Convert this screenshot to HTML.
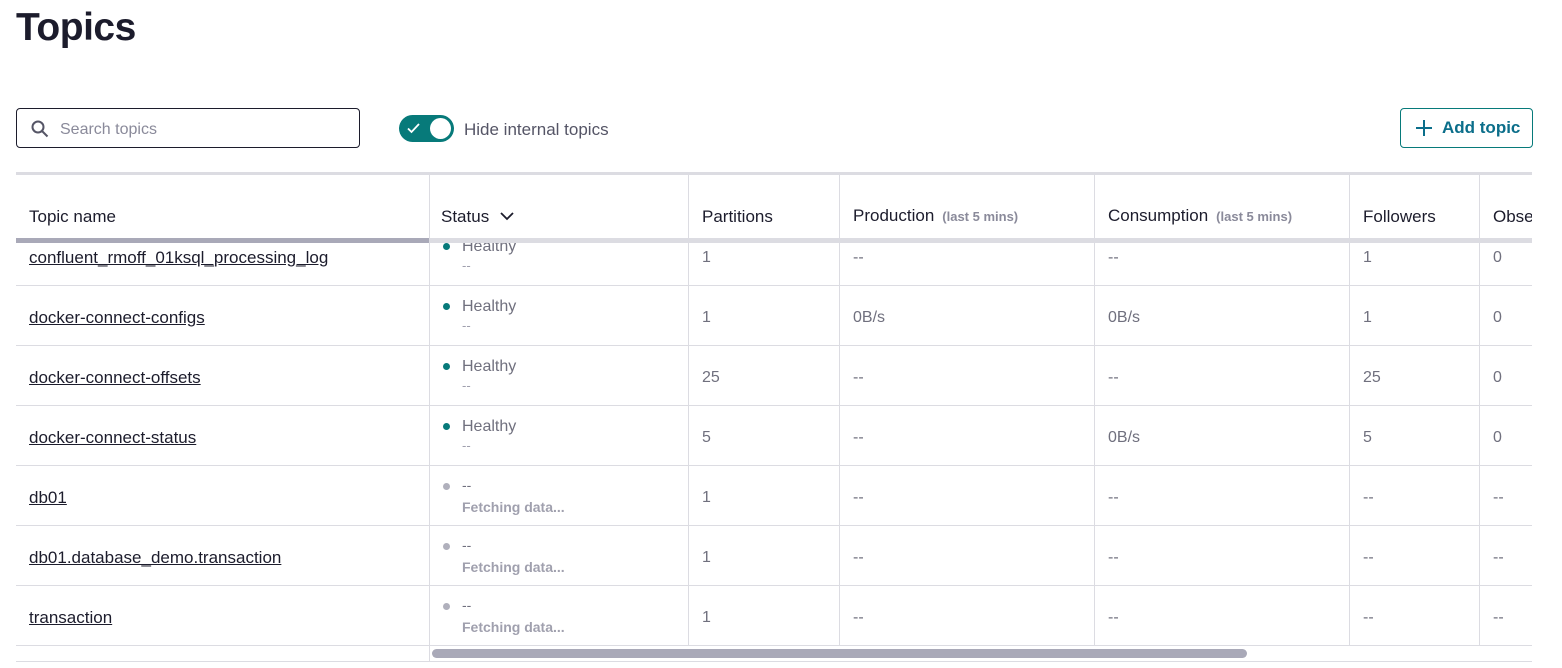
<!DOCTYPE html>
<html><head><meta charset="utf-8"><style>
*{box-sizing:border-box;margin:0;padding:0}
body{width:1562px;height:668px;background:#fff;font-family:"Liberation Sans",sans-serif;position:relative;overflow:hidden;color:#1c1c2c}
.a{position:absolute}
h1{position:absolute;left:16px;top:6px;font-size:39px;font-weight:bold;color:#1c1c2c;letter-spacing:-0.5px}
.search{left:16px;top:108px;width:344px;height:40px;border:1px solid #1c1c2c;border-radius:4px}
.search span{position:absolute;left:43px;top:12px;font-size:16px;color:#8a8a9a}
.tog{left:399px;top:115px;width:55px;height:27px;border-radius:14px;background:#077a7a}
.tog i{position:absolute;right:3px;top:3px;width:21px;height:21px;border-radius:50%;background:#fff}
.lbl{left:464px;top:120px;font-size:17px;color:#555566}
.btn{left:1400px;top:108px;width:133px;height:40px;border:1px solid #077a7a;border-radius:4px;color:#0b6e8a;font-size:17px;font-weight:bold}
.row{position:absolute;left:16px;width:1516px;height:60px;border-bottom:1px solid #dcdce2}
.c{position:absolute;top:0;height:100%;border-left:1px solid #dcdce2}
.name{position:absolute;left:13px;font-size:17px;color:#1c1c2c;text-decoration:underline}
.v{position:absolute;font-size:16px;color:#70707e}
.dot{position:absolute;width:7px;height:7px;border-radius:50%}
.hd{position:absolute;font-size:17px;color:#1c1c2c}
.sm{font-size:13px;color:#8a8a9a;margin-left:8px;font-weight:bold}
</style></head><body>
<h1>Topics</h1>
<div class="a search"><svg class="a" style="left:14px;top:11px" width="18" height="18" viewBox="0 0 18 18"><circle cx="7" cy="7" r="5.5" fill="none" stroke="#555566" stroke-width="2"/><path d="M11 11l5.5 5.5" stroke="#555566" stroke-width="2"/></svg><span>Search topics</span></div>
<div class="a tog"><svg class="a" style="left:8px;top:8px" width="13" height="11" viewBox="0 0 13 11"><path d="M1 5.5l3.5 3.5L12 1" fill="none" stroke="#fff" stroke-width="1.8"/></svg><i></i></div>
<div class="a lbl">Hide internal topics</div>
<div class="a btn"><svg class="a" style="left:14px;top:10px" width="18" height="18" viewBox="0 0 18 18"><path d="M9 1v16M1 9h16" stroke="#0b6e8a" stroke-width="2"/></svg><span class="a" style="left:41px;top:9px">Add topic</span></div>

<div id="rows"></div>
<script>
var data=[
["confluent_rmoff_01ksql_processing_log",1,"1","--","--","1","0"],
["docker-connect-configs",1,"1","0B/s","0B/s","1","0"],
["docker-connect-offsets",1,"25","--","--","25","0"],
["docker-connect-status",1,"5","--","0B/s","5","0"],
["db01",0,"1","--","--","--","--"],
["db01.database_demo.transaction",0,"1","--","--","--","--"],
["transaction",0,"1","--","--","--","--"]];
var cols=[413,672,823,1078,1333,1463];
var h="";
data.forEach(function(d,i){
 var t=226+i*60;
 h+='<div class="row" style="top:'+t+'px">';
 cols.forEach(function(x){h+='<div class="c" style="left:'+x+'px"></div>'});
 h+='<div class="name" style="top:22px">'+d[0]+'</div>';
 if(d[1]){h+='<div class="dot" style="left:427px;top:17px;background:#077a7a"></div><div class="v" style="left:446px;top:12px">Healthy</div><div class="v" style="left:446px;top:32px;font-size:13px;color:#a0a0ae">--</div>';}
 else{h+='<div class="dot" style="left:427px;top:17px;background:#b0b0bc"></div><div class="v" style="left:446px;top:11px;font-size:14px">--</div><div class="v" style="left:446px;top:33px;font-size:14px;font-weight:bold;color:#a0a0ae">Fetching data...</div>';}
 h+='<div class="v" style="left:686px;top:23px">'+d[2]+'</div>';
 h+='<div class="v" style="left:837px;top:23px">'+d[3]+'</div>';
 h+='<div class="v" style="left:1092px;top:23px">'+d[4]+'</div>';
 h+='<div class="v" style="left:1347px;top:23px">'+d[5]+'</div>';
 h+='<div class="v" style="left:1477px;top:23px">'+d[6]+'</div>';
 h+='</div>';
});
document.getElementById("rows").innerHTML=h;
</script>
<div class="a" style="left:16px;top:172px;width:1516px;height:66px;background:#fff;border-top:3px solid #dcdce2">
 <div class="c" style="left:413px"></div><div class="c" style="left:672px"></div><div class="c" style="left:823px"></div><div class="c" style="left:1078px"></div><div class="c" style="left:1333px"></div><div class="c" style="left:1463px"></div>
 <div class="hd" style="left:13px;top:32px">Topic name</div>
 <div class="hd" style="left:425px;top:32px">Status <svg style="margin-left:6px;vertical-align:1px" width="14" height="9" viewBox="0 0 14 9"><path d="M1 1l6 6 6-6" fill="none" stroke="#1c1c2c" stroke-width="1.8"/></svg></div>
 <div class="hd" style="left:686px;top:32px">Partitions</div>
 <div class="hd" style="left:837px;top:31px">Production<span class="sm">(last 5 mins)</span></div>
 <div class="hd" style="left:1092px;top:31px">Consumption<span class="sm">(last 5 mins)</span></div>
 <div class="hd" style="left:1347px;top:32px">Followers</div>
 <div class="hd" style="left:1477px;top:32px;width:39px;overflow:hidden;white-space:nowrap">Observers</div>
</div>
<div class="a" style="left:16px;top:238px;width:1516px;height:5px;background:#dcdce2"></div>
<div class="a" style="left:16px;top:238px;width:413px;height:5px;background:#a9a9b8"></div>
<div class="a" style="left:429px;top:646px;width:1103px;height:15px;background:#fff;border-left:1px solid #dcdce2"></div>
<div class="a" style="left:432px;top:649px;width:815px;height:9px;border-radius:5px;background:#a9a9b8"></div>
<div class="a" style="left:16px;top:661px;width:1516px;height:1px;background:#dcdce2"></div>
</body></html>
